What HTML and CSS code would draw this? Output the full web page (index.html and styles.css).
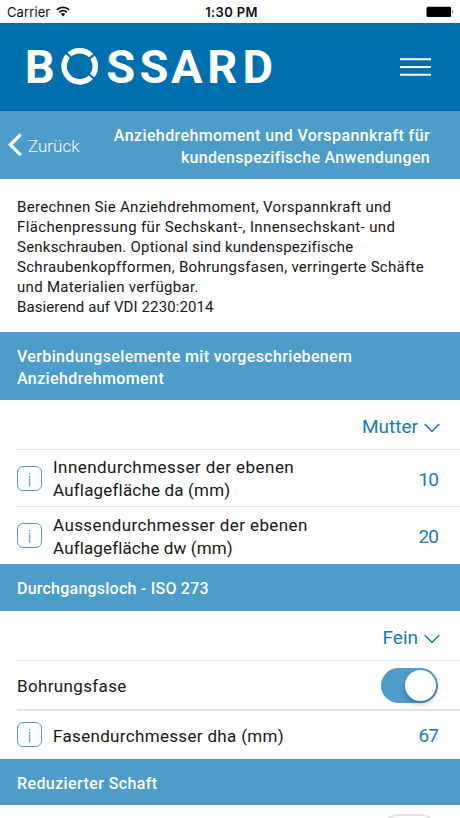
FILE: index.html
```html
<!DOCTYPE html>
<html lang="de">
<head>
<meta charset="utf-8">
<title>Bossard</title>
<link rel="stylesheet" href="styles.css">
</head>
<body>
<div class="status">
  <div class="carrier"><span>Carrier</span>
    <svg width="14" height="11" viewBox="0 0 14 11" fill="none" stroke="#111" stroke-width="1.7"><path d="M.8 3.9a8.8 8.8 0 0 1 12.4 0M3.1 6.3a5.5 5.5 0 0 1 7.8 0"/><path d="M4.8 8.1a3.1 3.1 0 0 1 4.4 0L7 10.4z" fill="#111" stroke="none"/></svg>
  </div>
  <div class="time">1:30 PM</div>
  <svg class="battery" width="28" height="12" viewBox="0 0 28 12"><rect x=".5" y=".7" width="24.6" height="10.2" rx="1.5"/><path d="M26 4q1.6 1.8 0 3.6z"/></svg>
</div>
<header class="header">
  <svg class="logo" width="256" height="66" viewBox="-4 -12 256 66">
    <text y="37" x="-0.3">B</text>
    <text y="37" x="81.3 114.5 146 182.3 217.5">SSARD</text>
    <circle cx="54.7" cy="20.3" r="15.6" fill="none" stroke="#fff" stroke-width="5.6"/>
    <path d="M38.7 4.3l9 9M61.7 14.8l10-8.4M61.7 26.5l10 8" class="gap"/>
  </svg>
  <svg width="32" height="20" viewBox="0 0 32 20" fill="#fff"><path d="M0 1.2h31v2.1H0zM0 9h31v2.1H0zM0 16.7h31v2.1H0z"/></svg>
</header>
<nav class="subheader">
  <div class="back"><svg width="14" height="24" viewBox="0 0 14 24" fill="none" stroke="#fff" stroke-width="3.3"><path d="M12.7 1.4L2.4 11.8l10.3 10.4"/></svg><span>Zurück</span></div>
  <h1><span class="t1">Anziehdrehmoment und Vorspannkraft für</span><br><span class="t2">kundenspezifische Anwendungen</span></h1>
</nav>
<p class="intro"><span class="p1">Berechnen Sie Anziehdrehmoment, Vorspannkraft und</span><br><span class="p2">Flächenpressung für Sechskant-, Innensechskant- und</span><br><span class="p3">Senkschrauben. Optional sind kundenspezifische</span><br><span class="p4">Schraubenkopfformen, Bohrungsfasen, verringerte Schäfte</span><br><span class="p5">und Materialien verfügbar.</span><br><span class="p6">Basierend auf VDI 2230:2014</span></p>
<h2 class="section tall"><span><span class="s1">Verbindungselemente mit vorgeschriebenem</span><br><span class="s2">Anziehdrehmoment</span></span></h2>
<div class="row select first"><span>Mutter</span><svg class="chev" width="16" height="10" viewBox="0 0 16 10"><path d="M.7 1l7.3 7.6L15.3 1"/></svg></div>
<div class="row double"><span class="info">i</span><span class="label"><span class="l1">Innendurchmesser der ebenen</span><br><span class="l2">Auflagefläche da (mm)</span></span><span class="value">10</span></div>
<div class="row double last"><span class="info">i</span><span class="label"><span class="l3">Aussendurchmesser der ebenen</span><br><span class="l4">Auflagefläche dw (mm)</span></span><span class="value">20</span></div>
<h2 class="section hole"><span class="s3">Durchgangsloch - ISO 273</span></h2>
<div class="row select"><span>Fein</span><svg class="chev" width="16" height="10" viewBox="0 0 16 10"><path d="M.7 1l7.3 7.6L15.3 1"/></svg></div>
<div class="row switchrow"><span class="label l5">Bohrungsfase</span><span class="toggle on"><span class="knob"></span></span></div>
<div class="row single"><span class="info">i</span><span class="label l6">Fasendurchmesser dha (mm)</span><span class="value">67</span></div>
<h2 class="section shaft"><span class="s4">Reduzierter Schaft</span></h2>
<div class="row nextrow"><span class="toggle off"></span></div>
</body>
</html>
```
FILE: styles.css
```css
* { box-sizing: border-box; }
html, body { margin: 0; height: 818px; overflow: hidden; }
body { width: 460px; background: #fff; color: #161616; font-family: Roboto, "Liberation Sans", sans-serif; display: flex; flex-direction: column; }
body > * { flex-shrink: 0; }
span { white-space: nowrap; }
.status { height: 23px; padding: 1px 6px 0 7px; display: grid; grid-template-columns: 1fr auto 1fr; align-items: center; font: 13px/22px Inter, sans-serif; color: #111; }
.carrier { display: flex; align-items: center; gap: 6px; letter-spacing: .1px; }
.carrier svg { margin-top: -2px; }
.time { font-weight: 600; letter-spacing: .35px; margin-left: 2px; }
.battery { justify-self: end; fill: #000; margin-top: -1px; }
.header { height: 88px; background: #006fae; display: flex; align-items: center; justify-content: space-between; padding: 0 28px 0 21px; }
.logo text { font: bold 47px Roboto, sans-serif; fill: #fff; }
.gap { stroke: #006fae; stroke-width: 2.2; fill: none; }
.subheader { height: 68px; background: #4e9cc9; color: #fff; display: flex; align-items: center; justify-content: space-between; padding: 0 30px 0 8px; }
.back { display: flex; align-items: center; gap: 6px; font-size: 17px; font-weight: 300; letter-spacing: 0; }
.back span { padding-top: 2px; }
h1 { margin: 0; padding-top: 4px; font-size: 16px; line-height: 22px; font-weight: 500; text-align: right; }
.t1 { letter-spacing: .39px; }
.t2 { letter-spacing: .3px; }
.intro { margin: 0; height: 153px; padding: 18px 17px 0; font-size: 15px; line-height: 20px; letter-spacing: .3px; }
.p2 { letter-spacing: .38px; }
.p3 { letter-spacing: .22px; }
.p6 { letter-spacing: .1px; }
.section { margin: 0; background: #4e9cc9; color: #fff; padding: 0 17px; display: flex; align-items: center; font-size: 16px; line-height: 22px; font-weight: 500; letter-spacing: .4px; }
.tall { height: 68px; padding-top: 3px; }
.s1 { letter-spacing: .36px; }
.hole { height: 47px; padding-top: 3px; }
.s3 { letter-spacing: .23px; }
.shaft { height: 46px; padding-top: 3px; }
.row { display: flex; align-items: center; margin-left: 17px; padding-right: 22px; border-bottom: 1px solid #e3e3e5; }
.select { height: 50px; justify-content: flex-end; gap: 6px; padding-right: 20px; padding-top: 3px; color: #187bb0; font-size: 19px; letter-spacing: 0; }
.chev { fill: none; stroke: #187bb0; stroke-width: 1.4; margin-top: 3px; }
.double { height: 57px; }
.last { border-bottom: 0; }
.info { width: 25px; height: 25px; margin-right: 11px; border: 1px solid #4e9cc9; border-radius: 6px; color: #4e9cc9; font-size: 19px; font-weight: 300; line-height: 25px; text-align: center; }
.label { flex: 1; font-size: 17px; line-height: 23px; padding-top: 2px; }
.l1 { letter-spacing: .45px; }
.l2 { letter-spacing: .18px; }
.l3 { letter-spacing: .4px; }
.l4 { letter-spacing: .13px; }
.l5 { letter-spacing: .35px; }
.l6 { letter-spacing: .33px; }
.value { color: #187bb0; font-size: 19px; letter-spacing: -.9px; line-height: 23px; padding-top: 2px; }
.last .value, .single .value { padding-top: 1px; }
.switchrow { height: 50px; border-bottom: 2px solid #e3e3e5; }
.single { height: 48px; border-bottom: 0; }
.single .info { margin-top: -1px; }
.toggle { width: 57px; height: 35px; border-radius: 18px; }
.on { background: #4e9cc9; padding: 2px; display: flex; justify-content: flex-end; }
.knob { width: 31px; height: 31px; border-radius: 50%; background: #fff; box-shadow: 0 3px 5px rgba(0,0,0,.25); }
.nextrow { height: 52px; justify-content: flex-end; border: 0; }
.off { border: 2px solid #e3e3e5; }
```
